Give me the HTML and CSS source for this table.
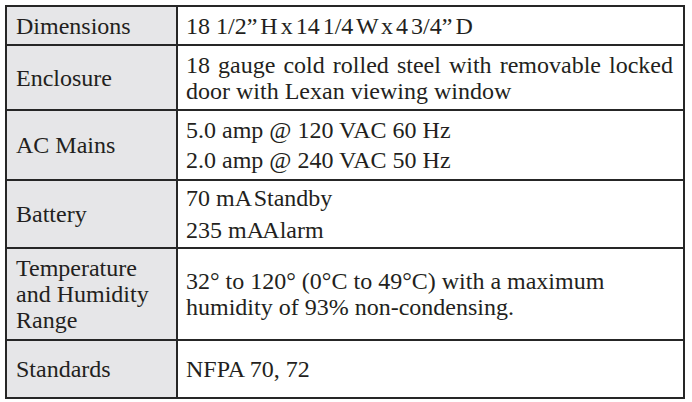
FILE: index.html
```html
<!DOCTYPE html>
<html lang="en">

<head>
    <meta charset="UTF-8">
    <title>Specifications</title>
    <link rel="stylesheet" href="styles.css">
</head>

<body>
    <div class="specs">
        <div class="label row1">Dimensions</div>
        <div class="value row1"><span>18 <span class="tight">1/2” H x 14 1/4 W x 4 3/4” D</span></span></div>

        <div class="label row2">Enclosure</div>
        <div class="value row2"><p class="justify">18 gauge cold rolled steel with removable locked door with Lexan viewing window</p></div>

        <div class="label row3">AC Mains</div>
        <div class="value row3">
            <p class="item">5.0 amp @ 120 VAC 60 Hz</p>
            <p class="item">2.0 amp @ 240 VAC 50 Hz</p>
        </div>

        <div class="label row4">Battery</div>
        <div class="value row4">
            <p class="item item-wide">70 <span class="tight">mA Standby</span></p>
            <p class="item item-wide">235 <span class="tighter">mA Alarm</span></p>
        </div>

        <div class="label row5">Temperature and Humidity Range</div>
        <div class="value row5"><p>32° to 120° (0°C to 49°C) with a maximum humidity of 93% non-condensing.</p></div>

        <div class="label row6">Standards</div>
        <div class="value row6">NFPA 70, 72</div>
    </div>
</body>

</html>
```

FILE: styles.css
```css
body {
    margin: 0;
    background: #fff;
    font-family: "Liberation Serif", "Times New Roman", serif;
    color: #231f20;
}

div.specs {
    display: grid;
    grid-template-columns: 169px 505px;
    grid-template-rows: 37px 63px 68px 66px 90px 56px;
    gap: 2px;
    width: 676px;
    margin: 5px;
    padding: 2px;
    background: #262626;
    font-size: 24px;
    line-height: 26px;
}

div.label,
div.value {
    display: flex;
    flex-direction: column;
    justify-content: center;
}

div.label {
    background: #e6e6e8;
    padding: 0 10px 0 9px;
}

div.value {
    background: #fff;
    padding: 0 10px 0 8px;
}

div.value p {
    margin: 0;
}

p.justify {
    text-align: justify;
}

p.item {
    line-height: 30px;
}

p.item-wide {
    line-height: 32px;
}

span.tight {
    word-spacing: -3px;
}

span.tighter {
    word-spacing: -5px;
}
```
